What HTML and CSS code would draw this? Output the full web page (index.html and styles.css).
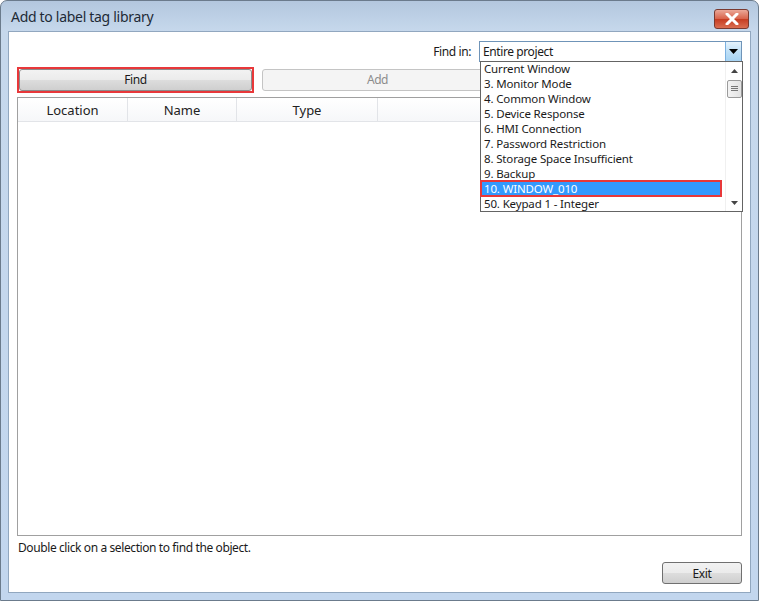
FILE: index.html
```html
<!DOCTYPE html>
<html>
<head>
<meta charset="utf-8">
<link rel="stylesheet" href="styles.css">
</head>
<body>
<div class="window">
  <div class="titlebar">
    <span class="title">Add to label tag library</span>
    <span class="close"><svg width="14" height="12" viewBox="0 0 14 12"><path d="M2 1 L12 11 M12 1 L2 11" stroke="#fff" stroke-width="3" stroke-linecap="round"/></svg></span>
  </div>
  <div class="client">
    <div class="findrow">
      <span class="findlabel">Find in:</span>
      <div class="combo">
        <span class="combo-text">Entire project</span>
        <span class="combo-btn"><svg width="9" height="5" viewBox="0 0 9 5"><path d="M0 0 H9 L4.5 5 Z" fill="#000"/></svg></span>
      </div>
    </div>
    <div class="btnrow">
      <div class="find-wrap"><div class="btn btn-find">Find</div></div>
      <div class="btn btn-add">Add</div>
    </div>
    <div class="list">
      <div class="header">
        <div class="col c1">Location</div>
        <div class="col c2">Name</div>
        <div class="col c3">Type</div>
        <div class="col c4"></div>
      </div>
    </div>
    <div class="status">Double click on a selection to find the object.</div>
    <div class="exitrow"><div class="btn btn-exit">Exit</div></div>

    <div class="dropdown">
      <div class="items">
        <div class="item">Current Window</div>
        <div class="item">3. Monitor Mode</div>
        <div class="item">4. Common Window</div>
        <div class="item">5. Device Response</div>
        <div class="item">6. HMI Connection</div>
        <div class="item">7. Password Restriction</div>
        <div class="item">8. Storage Space Insufficient</div>
        <div class="item">9. Backup</div>
        <div class="item sel">10. WINDOW_010</div>
        <div class="item">50. Keypad 1 - Integer</div>
      </div>
      <div class="scroll">
        <span class="arrow"><svg width="7" height="4" viewBox="0 0 7 4"><path d="M0 4 H7 L3.5 0 Z" fill="#444"/></svg></span>
        <span class="thumb"><svg width="7" height="6" viewBox="0 0 7 6"><path d="M0 0.5 H7 M0 2.5 H7 M0 4.5 H7" stroke="#777" stroke-width="1"/></svg></span>
        <span class="track"></span>
        <span class="arrow"><svg width="7" height="4" viewBox="0 0 7 4"><path d="M0 0 H7 L3.5 4 Z" fill="#444"/></svg></span>
      </div>
    </div>
  </div>
</div>
</body>
</html>
```
FILE: styles.css
```css
* { box-sizing: border-box; }
html, body { margin: 0; padding: 0; background: #fff; }
body {
  font-family: "Noto Sans", "Open Sans", sans-serif;
  font-size: 12px;
  letter-spacing: -0.4px;
  color: #1a1a1a;
}
.window {
  width: 759px;
  height: 601px;
  border: 1px solid #6b7b8c;
  border-radius: 7px 7px 0 0;
  background: linear-gradient(to bottom, #b3c7de 0px, #c6d8ec 30px, #c2d6ee 100%);
  display: flex;
  flex-direction: column;
}
.titlebar {
  height: 30px;
  display: flex;
  align-items: center;
  justify-content: space-between;
  padding: 0 9px 0 10px;
}
.title {
  font-size: 14px;
  color: #1e2a36;
  letter-spacing: -0.3px;
  padding-top: 1px;
}
.close {
  width: 35px;
  height: 20px;
  margin-top: 6px;
  border: 1px solid #7a3a30;
  border-radius: 3px;
  background: linear-gradient(to bottom, #eba898 0%, #d9644c 48%, #c63d22 52%, #da6e52 100%);
  display: flex;
  align-items: center;
  justify-content: center;
}
.client {
  position: relative;
  flex: 1;
  margin: 0 7px 7px 7px;
  background: #fff;
  border: 1px solid #91a7bf;
  padding: 9px 8px 0 8px;
  display: flex;
  flex-direction: column;
}
.findrow {
  display: flex;
  justify-content: flex-end;
  align-items: center;
  gap: 8px;
  height: 21px;
}
.findlabel { color: #1a1a1a; }
.combo {
  width: 263px;
  height: 21px;
  border: 1px solid #6f94b8;
  display: flex;
  align-items: center;
  background: #fff;
}
.combo-text { flex: 1; padding-left: 3px; }
.combo-btn {
  width: 16px;
  height: 19px;
  border-left: 1px solid #7ab0e0;
  background: linear-gradient(to bottom, #e6f3fc 0%, #bfe0f7 50%, #a6d3f3 100%);
  display: flex;
  align-items: center;
  justify-content: center;
}
.btnrow {
  display: flex;
  gap: 8px;
  margin-top: 4px;
  height: 27px;
  align-items: center;
}
.find-wrap {
  border: 2px solid #e8383a;
  padding: 0;
  width: 237px;
  height: 26px;
  display: flex;
}
.btn {
  height: 22px;
  border: 1px solid #707070;
  border-radius: 3px;
  display: flex;
  align-items: center;
  justify-content: center;
  background: linear-gradient(to bottom, #f2f2f2 0%, #ebebeb 50%, #dddddd 51%, #cfcfcf 100%);
}
.btn-find { flex: 1; height: 22px; border-color: #8c8c8c; }
.btn-add {
  width: 231px;
  border-color: #c4c4c4;
  background: #f4f4f4;
  color: #8c8c8c;
}
.list {
  margin-top: 4px;
  height: 439px;
  border: 1px solid #a0a0a0;
  background: #fff;
}
.header {
  display: flex;
  height: 24px;
  background: linear-gradient(to bottom, #ffffff 0%, #f6f7f9 100%);
  border-bottom: 1px solid #e2e4e8;
}
.col {
  display: flex;
  align-items: center;
  justify-content: center;
  border-right: 1px solid #e2e4e8;
  font-size: 13px;
  letter-spacing: 0;
  color: #222;
}
.c1 { width: 110px; }
.c2 { width: 109px; }
.c3 { width: 141px; }
.c4 { flex: 1; border-right: none; }
.status {
  margin-top: 5px;
  height: 15px;
  line-height: 14px;
  padding-left: 1px;
  font-size: 12px;
}
.exitrow {
  display: flex;
  justify-content: flex-end;
  margin-top: 6px;
}
.btn-exit { width: 80px; }
.dropdown {
  position: absolute;
  left: 471px;
  top: 29px;
  width: 263px;
  height: 151px;
  border: 1px solid #646464;
  background: #fff;
  display: flex;
}
.items { flex: 1; margin-top: -1px; }
.item {
  height: 15px;
  line-height: 15px;
  padding-left: 3px;
  white-space: nowrap;
  font-size: 11.5px;
  letter-spacing: -0.15px;
  color: #1a1a1a;
}
.item.sel {
  background: #3399ff;
  color: #fff;
  outline: 2px solid #e8383a;
  outline-offset: -1px;
  margin-right: 4px;
}
.scroll {
  width: 17px;
  display: flex;
  flex-direction: column;
  align-items: center;
  background: #fff;
  border-left: 1px solid #f0f0f0;
}
.scroll .arrow {
  height: 17px;
  display: flex;
  align-items: center;
  justify-content: center;
}
.scroll .thumb {
  margin-top: 1px;
  width: 15px;
  height: 18px;
  border: 1px solid #9a9a9a;
  border-radius: 2px;
  background: linear-gradient(to right, #f3f3f3, #e2e2e2);
  display: flex;
  align-items: center;
  justify-content: center;
}
.scroll .track { flex: 1; }
```
